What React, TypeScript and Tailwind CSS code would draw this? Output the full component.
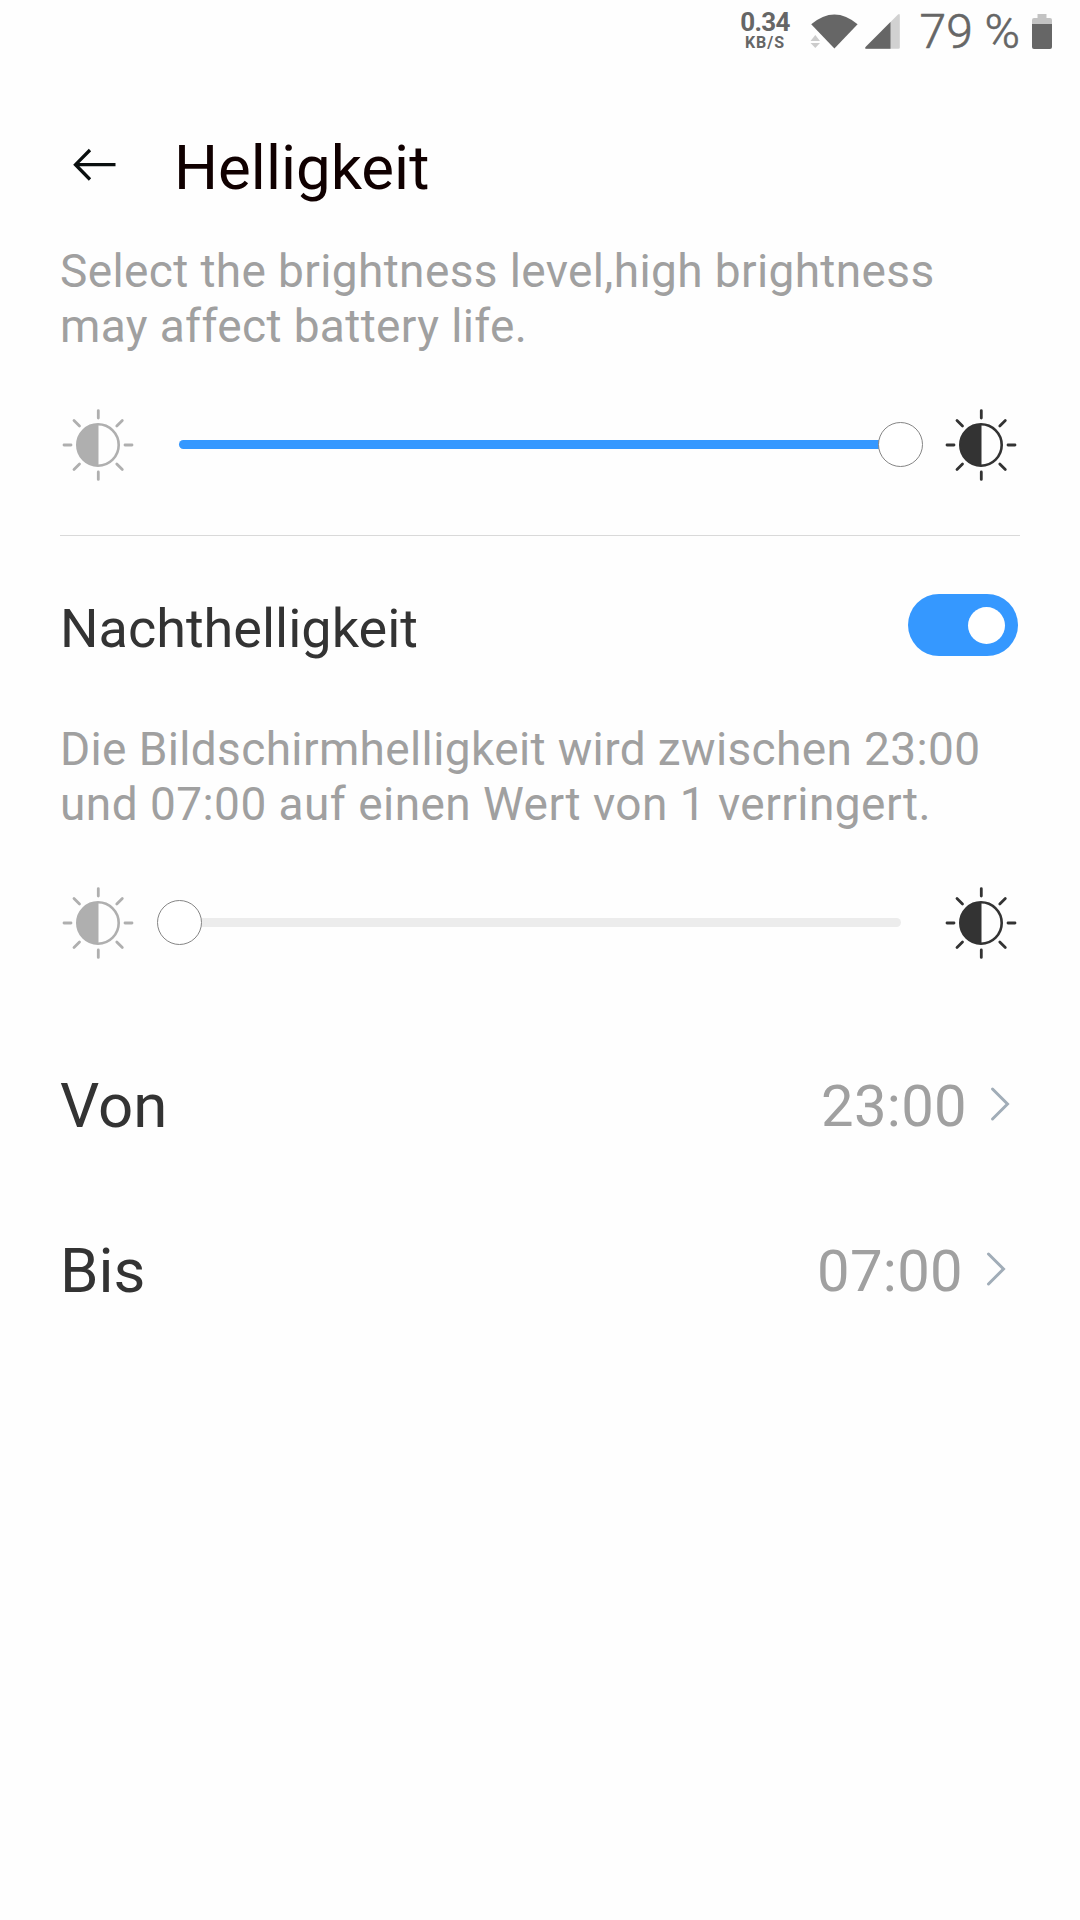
import { useState } from 'react';

function BrightnessIcon({ className }: { className: string }) {
  return (
    <svg viewBox="-36 -36 72 72" className={`h-[72px] w-[72px] shrink-0 ${className}`} fill="none">
      <circle r="20.7" stroke="currentColor" strokeWidth="2.6" />
      <path d="M0.5 -20.7 A20.7 20.7 0 0 0 0.5 20.7 Z" fill="currentColor" />
      <path
        d="M0.3 -34.4V-27M0.3 27V34.4M-34 0H-27M27 0H34M-24 -24.5L-18.5 -19M24.3 -24.5L18.8 -19M-24 24.5L-18.5 19M24.3 24.5L18.8 19"
        stroke="currentColor"
        strokeWidth="2.8"
        strokeLinecap="round"
      />
    </svg>
  );
}

function Slider({ value }: { value: number }) {
  return (
    <div className="h-[9px] w-[721.5px] shrink-0 rounded-full bg-[#ececec]">
      <div className="relative h-full rounded-full bg-[#3598ff]" style={{ width: `${value}%` }}>
        <span className="absolute -top-[18px] -right-[22.5px] h-[45px] w-[45px] rounded-full border border-[#858585] bg-white" />
      </div>
    </div>
  );
}

function SliderRow({ value }: { value: number }) {
  return (
    <div className="flex h-[72px] items-center pl-[2px]">
      <BrightnessIcon className="text-[#afafaf]" />
      <div className="mr-[44.5px] mb-[1px] ml-[45px] flex items-center">
        <Slider value={value} />
      </div>
      <BrightnessIcon className="text-[#333333]" />
    </div>
  );
}

function TimeRow({ label, time, className }: { label: string; time: string; className: string }) {
  return (
    <div className={`flex h-[165px] items-center justify-between ${className}`}>
      <span className="text-[61.8px] leading-[72px] text-[#333333]">{label}</span>
      <div className="flex items-center">
        <span className="text-[58px] leading-[72px] tracking-[0.3px] text-[#a0a0a0]">{time}</span>
        <svg width="20" height="36" viewBox="0 0 20 36" fill="none" className="mb-[3px] ml-[23px]">
          <path d="M2.5 3L17.5 18L2.5 33" stroke="#a1adb8" strokeWidth="3" strokeLinecap="round" />
        </svg>
      </div>
    </div>
  );
}

function StatusBar() {
  return (
    <div className="flex h-16 items-start justify-end pr-[28px] text-[#666666]">
      <div className="mt-[8px] flex w-[60px] flex-col items-center font-bold">
        <span className="text-[26px] leading-[28px] tracking-[-0.7px]">0.34</span>
        <span className="text-[16px] leading-[14px] tracking-[1px]">KB/S</span>
      </div>
      <svg width="94" height="40" viewBox="0 0 94 40" className="mt-[12px] ml-[15px] shrink-0">
        <path d="M1.2 12.3Q24.4 -7.3 47.6 12.3L24.4 36.5Z" fill="#666666" />
        <path d="M0.5 29L5.3 23L10 29ZM0.5 31L5.3 36L10 31Z" fill="#cccccc" />
        <path d="M88 2.5Q89.8 1.2 89.8 3.5V35.5Q89.8 36.8 88.5 36.8H56Q54.3 36.5 55.6 35Z" fill="#d1d1d1" />
        <path d="M80.5 10V36.8H56Q54.3 36.5 55.6 35Z" fill="#666666" />
      </svg>
      <span className="mt-[2px] w-[128px] pl-[15.5px] text-[48px] leading-[60px] font-light whitespace-nowrap [-webkit-text-stroke:0.6px_#666666]">
        79 %
      </span>
      <svg width="20" height="36" viewBox="0 0 20 36" className="mt-[14px] shrink-0">
        <path d="M5.5 0H14.5V4H18Q20 4 20 6V11H0V6Q0 4 2 4H5.5Z" fill="#c3c3c3" />
        <path d="M0 10H20V33Q20 35 18 35H2Q0 35 0 33Z" fill="#666666" />
      </svg>
    </div>
  );
}

export default function App() {
  const [nightMode, setNightMode] = useState(true);

  return (
    <div className="h-[1920px] w-[1080px] overflow-hidden bg-[#fefefe] font-['Roboto',sans-serif]">
      <StatusBar />

      <header className="flex h-[180px] items-start pt-[68px]">
        <svg width="44" height="34" viewBox="0 0 44 34" fill="none" className="mt-[16px] ml-[73px]">
          <path d="M42.5 16.7H2.5M17 2L2.5 16.7L17 31.5" stroke="#0a0f0f" strokeWidth="3.3" />
        </svg>
        <h1 className="ml-[57px] text-[61.8px] leading-[72px] text-[#100000]">Helligkeit</h1>
      </header>

      <main className="px-[60px]">
        <p className="text-[46px] leading-[55px] tracking-[0.37px] whitespace-nowrap text-[#a0a0a0]">
          Select the brightness level,high brightness
          <br />
          may affect battery life.
        </p>
        <div className="mt-[55px]">
          <SliderRow value={100} />
        </div>
        <div className="mt-[54px] h-px bg-[#d9d9d9]" />

        <div className="mt-[58px] flex h-[62px] items-center justify-between">
          <span className="mt-[7px] text-[54px] leading-[62px] text-[#333333]">Nachthelligkeit</span>
          <button
            type="button"
            onClick={() => setNightMode(!nightMode)}
            className={`mr-[2.5px] flex h-[62px] w-[109.5px] items-center rounded-full px-[12.5px] ${
              nightMode ? 'justify-end bg-[#3598ff]' : 'justify-start bg-[#ececec]'
            }`}
          >
            <span className="h-[37px] w-[37px] rounded-full bg-white" />
          </button>
        </div>

        <p className="mt-[66px] text-[46px] leading-[55px] tracking-[0.37px] whitespace-nowrap text-[#a0a0a0]">
          Die Bildschirmhelligkeit wird zwischen 23:00
          <br />
          <span className="tracking-[0.45px]">und 07:00 auf einen Wert von 1 verringert.</span>
        </p>
        <div className="mt-[55px]">
          <SliderRow value={0} />
        </div>

        <div className="mt-[64px]">
          <TimeRow label="Von" time="23:00" className="pr-[10px]" />
          <TimeRow label="Bis" time="07:00" className="pr-[14px]" />
        </div>
      </main>
    </div>
  );
}
